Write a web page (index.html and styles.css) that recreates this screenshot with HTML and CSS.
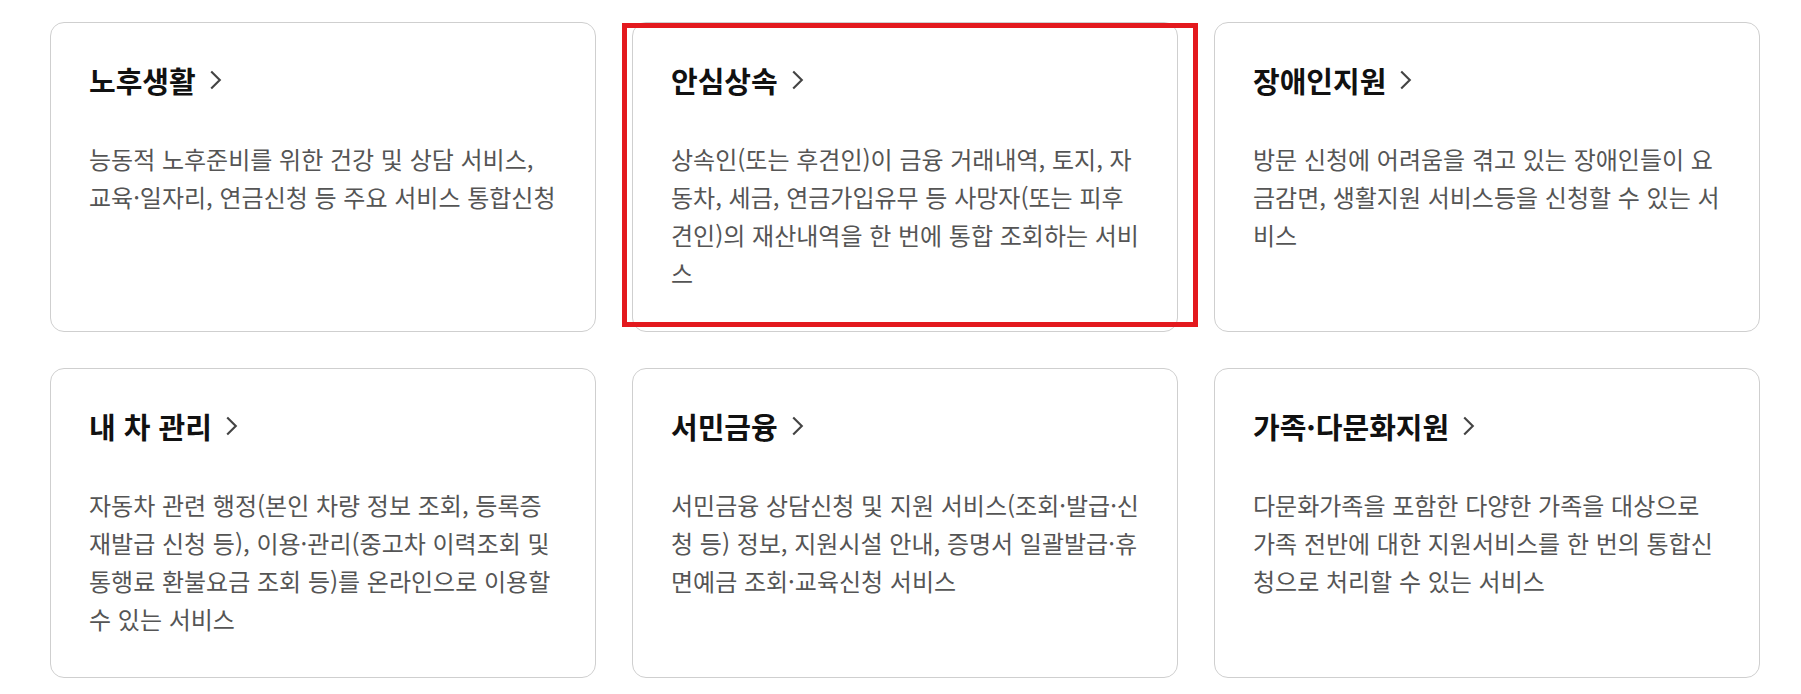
FILE: index.html
```html
<!DOCTYPE html>
<html lang="ko">
<head>
    <meta charset="UTF-8">
    <title>서비스 안내</title>
    <link rel="stylesheet" href="styles.css">
</head>
<body>
    <div class="service-grid">
        <a class="card" href="#">
            <h3 class="card-title">노후생활 <svg class="chevron" viewBox="0 0 14 22"><path d="M3 3 L11 11 L3 19"/></svg></h3>
            <p class="card-desc">능동적 노후준비를 위한 건강 및 상담 서비스, 교육·일자리, 연금신청 등 주요 서비스 통합신청</p>
        </a>
        <a class="card selected" href="#">
            <h3 class="card-title">안심상속 <svg class="chevron" viewBox="0 0 14 22"><path d="M3 3 L11 11 L3 19"/></svg></h3>
            <p class="card-desc">상속인(또는 후견인)이 금융 거래내역, 토지, 자동차, 세금, 연금가입유무 등 사망자(또는 피후견인)의 재산내역을 한 번에 통합 조회하는 서비스</p>
            <span class="highlight"></span>
        </a>
        <a class="card" href="#">
            <h3 class="card-title">장애인지원 <svg class="chevron" viewBox="0 0 14 22"><path d="M3 3 L11 11 L3 19"/></svg></h3>
            <p class="card-desc">방문 신청에 어려움을 겪고 있는 장애인들이 요금감면, 생활지원 서비스등을 신청할 수 있는 서비스</p>
        </a>
        <a class="card" href="#">
            <h3 class="card-title">내 차 관리 <svg class="chevron" viewBox="0 0 14 22"><path d="M3 3 L11 11 L3 19"/></svg></h3>
            <p class="card-desc">자동차 관련 행정(본인 차량 정보 조회, 등록증 재발급 신청 등), 이용·관리(중고차 이력조회 및 통행료 환불요금 조회 등)를 온라인으로 이용할 수 있는 서비스</p>
        </a>
        <a class="card" href="#">
            <h3 class="card-title">서민금융 <svg class="chevron" viewBox="0 0 14 22"><path d="M3 3 L11 11 L3 19"/></svg></h3>
            <p class="card-desc">서민금융 상담신청 및 지원 서비스(조회·발급·신청 등) 정보, 지원시설 안내, 증명서 일괄발급·휴면예금 조회·교육신청 서비스</p>
        </a>
        <a class="card" href="#">
            <h3 class="card-title">가족·다문화지원 <svg class="chevron" viewBox="0 0 14 22"><path d="M3 3 L11 11 L3 19"/></svg></h3>
            <p class="card-desc">다문화가족을 포함한 다양한 가족을 대상으로 가족 전반에 대한 지원서비스를 한 번의 통합신청으로 처리할 수 있는 서비스</p>
        </a>
    </div>
</body>
</html>
```

FILE: styles.css
```css
body {
    margin: 0;
    background: #fff;
    font-family: "Noto Sans CJK KR", "Noto Sans", sans-serif;
}
.service-grid {
    display: grid;
    grid-template-columns: repeat(3, 546px);
    grid-auto-rows: 310px;
    gap: 36px;
    padding: 22px 0 0 50px;
}
.card {
    position: relative;
    display: block;
    box-sizing: border-box;
    padding: 39px 38px 0 38px;
    border: 1px solid #cfcfcf;
    border-radius: 14px;
    text-decoration: none;
}
.card-title {
    display: flex;
    align-items: center;
    gap: 12px;
    margin: 0;
    font-size: 29px;
    font-weight: 700;
    line-height: 36px;
    color: #111;
}
.chevron {
    width: 15px;
    height: 24px;
    fill: none;
    stroke: #444;
    stroke-width: 2;
}
.card-desc {
    margin: 42px 0 0 0;
    font-size: 24px;
    line-height: 38px;
    color: #555;
}
/* red marker drawn over the selected card */
.highlight {
    position: absolute;
    top: 0;
    left: -11px;
    right: -21px;
    bottom: 4px;
    border: 5px solid #e3191e;
    pointer-events: none;
}
```
